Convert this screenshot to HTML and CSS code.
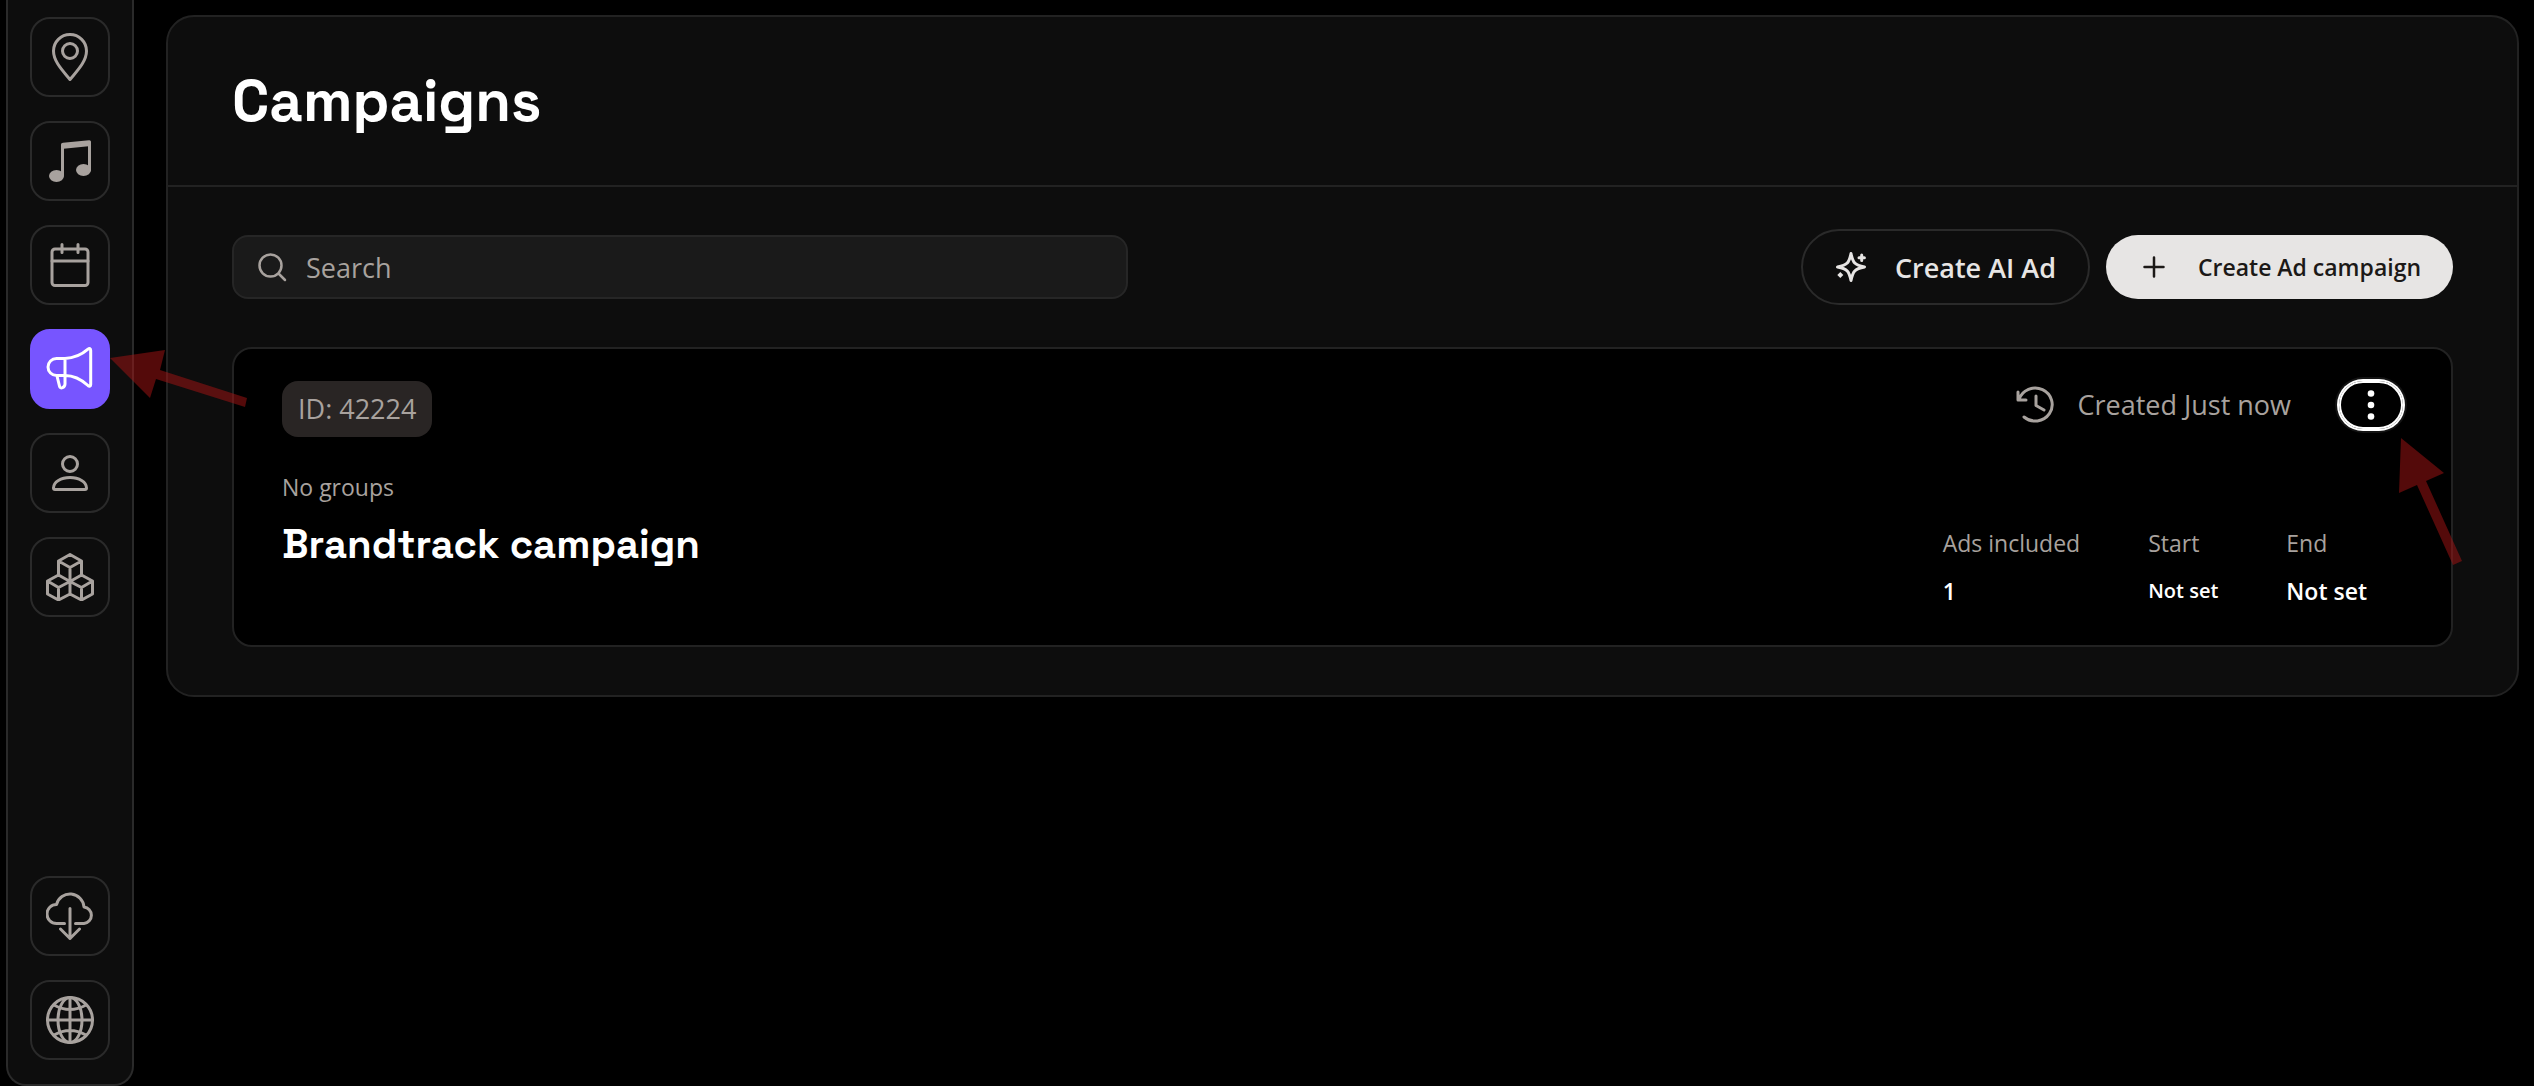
FILE: index.html
```
<!DOCTYPE html>
<html lang="en">
<head>
    <meta charset="UTF-8">
    <meta name="viewport" content="width=device-width, initial-scale=1.0">
    <title>Campaigns</title>
    <link rel="stylesheet" href="styles.css">
</head>
<body>
    <div class="app">
        <nav class="sidebar" aria-label="Main">
            <div class="nav-group">
                <a href="#" class="nav-item" aria-label="Locations">
                    <svg viewBox="0 0 48 48"><path d="M24 46.5C18 39 7.500 29 7.500 18a16.500 16.500 0 0 1 33 0C40.500 29 30 39 24 46.500z"/><circle cx="24" cy="18" r="7.500"/></svg>
                </a>
                <a href="#" class="nav-item" aria-label="Music">
                    <svg viewBox="0 0 48 48"><path d="M16.500 38V9l27-3v27"/><path class="solid" d="M15 7.500q0-1.500 2-1.800L43 3.200q2-.2 2 1.500V9l-30 3z"/><ellipse class="solid" cx="10.500" cy="39" rx="7.500" ry="6"/><ellipse class="solid" cx="37.500" cy="33" rx="7.500" ry="6"/></svg>
                </a>
                <a href="#" class="nav-item" aria-label="Schedule">
                    <svg viewBox="0 0 48 48"><rect x="6" y="8" width="36" height="36.500" rx="3"/><path d="M6 20h36M16 3.500v8M32 3.500v8"/></svg>
                </a>
                <div class="nav-marked">
                    <a href="#" class="nav-item active" aria-label="Campaigns" aria-current="page">
                        <svg viewBox="0 0 48 48"><path d="M19 13.500h-8.500a8.500 8.500 0 0 0 0 17H19q12 0 23 10c1.500 1.300 2.700.8 2.700-1V5.500c0-2-1.200-2.500-2.700-1.300Q32 13 19 13.500zM19 13.500V39c0 2.500-1 3-2.500 3.700-1.500.6-2.700 0-3-1.500L11 31"/></svg>
                    </a>
                    <svg class="arrow arrow-nav" viewBox="0 0 138 58" aria-hidden="true"><path d="M0 8 55 0 50 20 137 48 135 57 46 29 40 48z"/></svg>
                </div>
                <a href="#" class="nav-item" aria-label="Users">
                    <svg viewBox="0 0 48 48"><circle cx="24" cy="15" r="7.500"/><path d="M9 40.500h30q1.500 0 1.500-1.500C40.500 33 33 28.500 24 28.500S7.500 33 7.500 39q0 1.500 1.500 1.500z"/></svg>
                </a>
                <a href="#" class="nav-item" aria-label="Products">
                    <svg viewBox="0 0 48 48"><path d="M24 1.500 35.500 8v14L24 28.500 12.500 22V8zM12.500 8 24 14.500 35.500 8M24 14.500v14M12.500 22 24 28.500V41l-11.500 6L1.500 41V28zM1.500 28l11 6.500L24 28.500M12.500 34.500V47M35.500 22l11 6v13l-11 6L24 41M24 28.500l11.500 6 11-6.500M35.500 34.500V47"/></svg>
                </a>
            </div>
            <div class="nav-group">
                <a href="#" class="nav-item" aria-label="Downloads">
                    <svg viewBox="0 0 48 48"><path d="M18.500 31.500H10.500a9.500 9.500 0 0 1 0-19 14 14 0 0 1 27.500 2.500 8.300 8.300 0 0 1 0 16.500h-8.500M24 16.500v30M14.500 37l9.500 9.500L33.500 37"/></svg>
                </a>
                <a href="#" class="nav-item" aria-label="Language">
                    <svg viewBox="0 0 48 48"><circle cx="24" cy="24" r="22.500"/><ellipse cx="24" cy="24" rx="12" ry="22.500"/><path d="M24 1.500v45M1.500 24h45M8 9q16 9 32 0M8 39q16-9 32 0"/></svg>
                </a>
            </div>
        </nav>

        <main class="panel">
            <header class="panel-header">
                <h1>Campaigns</h1>
            </header>

            <div class="toolbar">
                <label class="search">
                    <svg viewBox="0 0 32 32"><circle cx="14.500" cy="14.500" r="11"/><path d="m23 23 6 6"/></svg>
                    <input type="text" placeholder="Search" aria-label="Search">
                </label>
                <div class="actions">
                    <button type="button" class="btn btn-outline">
                        <svg viewBox="0 0 32 32"><path d="M16 2.500c2 9.500 3.500 11.500 13.500 13.500-10 2-11.500 4-13.500 13.500-2-9.500-3.500-11.500-13.500-13.500 10-2 11.500-4 13.500-13.500zM26.700 4v5.400M24 6.700h5.400"/><path class="solid" d="m5.300 21 3 3-3 3-3-3z"/></svg>
                        Create AI Ad
                    </button>
                    <button type="button" class="btn btn-light">
                        <svg viewBox="0 0 32 32"><path d="M16 6.500v19M6.500 16h19"/></svg>
                        Create Ad campaign
                    </button>
                </div>
            </div>

            <article class="card">
                <div class="card-top">
                    <span class="badge">ID: 42224</span>
                    <div class="card-meta">
                        <svg class="history" viewBox="0 0 40 40"><path d="M3 7v8h8M4 14.500A17 16.500 0 1 1 9 32M21 11v9.500l8 4.500"/></svg>
                        <span class="created">Created Just now</span>
                        <div class="menu">
                            <button type="button" class="menu-btn" aria-label="More actions">
                                <svg viewBox="0 0 32 32"><circle cx="16" cy="4.500" r="3.300"/><circle cx="16" cy="16" r="3.300"/><circle cx="16" cy="27.500" r="3.300"/></svg>
                            </button>
                            <svg class="arrow arrow-menu" viewBox="0 0 64 128" aria-hidden="true"><path d="M2 0 45 35 27 43 63 123 54 127 18 47 0 55z"/></svg>
                        </div>
                    </div>
                </div>
                <div class="card-body">
                    <div class="card-info">
                        <p class="groups">No groups</p>
                        <h2>Brandtrack campaign</h2>
                    </div>
                    <dl class="stats">
                        <div>
                            <dt>Ads included</dt>
                            <dd>1</dd>
                        </div>
                        <div>
                            <dt>Start</dt>
                            <dd class="small">Not set</dd>
                        </div>
                        <div>
                            <dt>End</dt>
                            <dd>Not set</dd>
                        </div>
                    </dl>
                </div>
            </article>
        </main>
    </div>
</body>
</html>
```
FILE: styles.css
```
* {
    box-sizing: border-box;
}

body {
    margin: 0;
    background-color: #000;
    color: #fff;
    font-family: "Segoe UI", "Open Sans", sans-serif;
    font-size: 23px;
}

h1, h2, p, dl, dd {
    margin: 0;
}

svg {
    display: block;
    flex-shrink: 0;
    fill: none;
    stroke: currentColor;
    stroke-width: 3;
    stroke-linecap: round;
    stroke-linejoin: round;
}

svg .solid {
    fill: currentColor;
    stroke: none;
}

.app {
    display: flex;
    align-items: flex-start;
    gap: 32px;
    min-height: 100vh;
    padding: 0 15px 0 6px;
}

/* sidebar */
.sidebar {
    display: flex;
    flex-direction: column;
    justify-content: space-between;
    min-height: 100vh;
    padding: 17px 22px 24px;
    background-color: #0d0d0d;
    border: 2px solid #2a2a2a;
    border-top: none;
    border-radius: 0 0 20px 20px;
}

.nav-group {
    display: flex;
    flex-direction: column;
    gap: 24px;
}

.nav-item {
    display: flex;
    align-items: center;
    justify-content: center;
    width: 80px;
    height: 80px;
    color: #a8a29e;
    border: 2px solid #2a2a2a;
    border-radius: 20px;
}

.nav-item svg {
    width: 48px;
    height: 48px;
}

.nav-item.active {
    color: #fff;
    background-color: #7755ff;
    border-color: #7755ff;
}

.nav-marked {
    position: relative;
}

/* pointer arrows drawn over the page */
.arrow {
    position: absolute;
    z-index: 1;
    fill: rgba(168, 20, 20, 0.5);
    stroke: none;
    pointer-events: none;
}

.arrow-nav {
    top: 21px;
    left: 80px;
    width: 138px;
    height: 58px;
}

.arrow-menu {
    top: 57px;
    left: 60px;
    width: 64px;
    height: 128px;
}

/* main panel */
.panel {
    flex: 1;
    margin-top: 15px;
    background-color: #0d0d0d;
    border: 2px solid #222;
    border-radius: 28px;
}

.panel-header {
    padding: 48px 64px;
    border-bottom: 2px solid #222;
}

h1 {
    font-family: "Space Grotesk", Inter, sans-serif;
    font-size: 58px;
    font-weight: 600;
    line-height: 72px;
}

.toolbar {
    display: flex;
    align-items: center;
    justify-content: space-between;
    gap: 32px;
    padding: 42px 64px;
}

.search {
    display: flex;
    align-items: center;
    gap: 18px;
    width: 100%;
    max-width: 896px;
    height: 64px;
    padding: 0 22px;
    color: #a8a29e;
    background-color: #1a1a1a;
    border: 2px solid #262626;
    border-radius: 16px;
}

.search svg {
    width: 32px;
    height: 32px;
}

.search input {
    flex: 1;
    min-width: 0;
    padding: 0;
    color: #fff;
    font: inherit;
    font-size: 27px;
    background: none;
    border: none;
    outline: none;
}

.search input::placeholder {
    color: #a8a29e;
}

.actions {
    display: flex;
    flex-shrink: 0;
    align-items: center;
    gap: 16px;
}

.btn {
    display: flex;
    align-items: center;
    gap: 28px;
    font-family: inherit;
    font-weight: 600;
    border: none;
    border-radius: 38px;
    cursor: pointer;
}

.btn svg {
    width: 32px;
    height: 32px;
}

.btn-outline {
    height: 76px;
    padding: 0 32px;
    color: #e7e5e4;
    font-size: 27px;
    background: none;
    border: 2px solid #2a2a2a;
}

.btn-light {
    height: 64px;
    padding: 0 32px;
    color: #1c1917;
    font-size: 23px;
    background-color: #e7e5e4;
}

.search svg,
.btn-light svg {
    stroke-width: 2.5;
}

/* campaign card */
.card {
    margin: 0 64px 48px;
    padding: 32px 48px 36px;
    background-color: #000;
    border: 2px solid #222;
    border-radius: 20px;
}

.card-top {
    display: flex;
    align-items: flex-start;
    justify-content: space-between;
}

.badge {
    padding: 0 16px;
    color: #a8a29e;
    font-size: 27px;
    line-height: 56px;
    background-color: #292524;
    border-radius: 16px;
}

.card-meta {
    display: flex;
    align-items: center;
    color: #a8a29e;
}

.history {
    width: 40px;
    height: 40px;
}

.created {
    margin: 0 48px 0 22px;
    font-size: 27px;
    line-height: 48px;
}

.menu {
    position: relative;
}

.menu-btn {
    display: flex;
    align-items: center;
    justify-content: center;
    width: 64px;
    height: 48px;
    padding: 0;
    color: #fff;
    background: none;
    border: 2px solid #fff;
    border-radius: 24px;
    box-shadow: 0 0 0 2px #fff, 0 0 0 4px #141414;
    cursor: pointer;
}

.menu-btn svg {
    width: 32px;
    height: 32px;
    fill: currentColor;
    stroke: none;
}

.card-body {
    display: flex;
    align-items: flex-start;
    justify-content: space-between;
    margin-top: 32px;
    color: #a8a29e;
}

.groups {
    line-height: 36px;
}

h2 {
    margin-top: 12px;
    color: #fff;
    font-family: "Space Grotesk", Inter, sans-serif;
    font-size: 40px;
    font-weight: 600;
    line-height: 56px;
}

.stats {
    display: flex;
    gap: 68px;
    padding: 56px 36px 0 0;
}

.stats dt {
    line-height: 36px;
}

.stats dd {
    margin-top: 12px;
    color: #fff;
    font-weight: 600;
    line-height: 36px;
}

.stats .small {
    font-size: 20px;
}
```
